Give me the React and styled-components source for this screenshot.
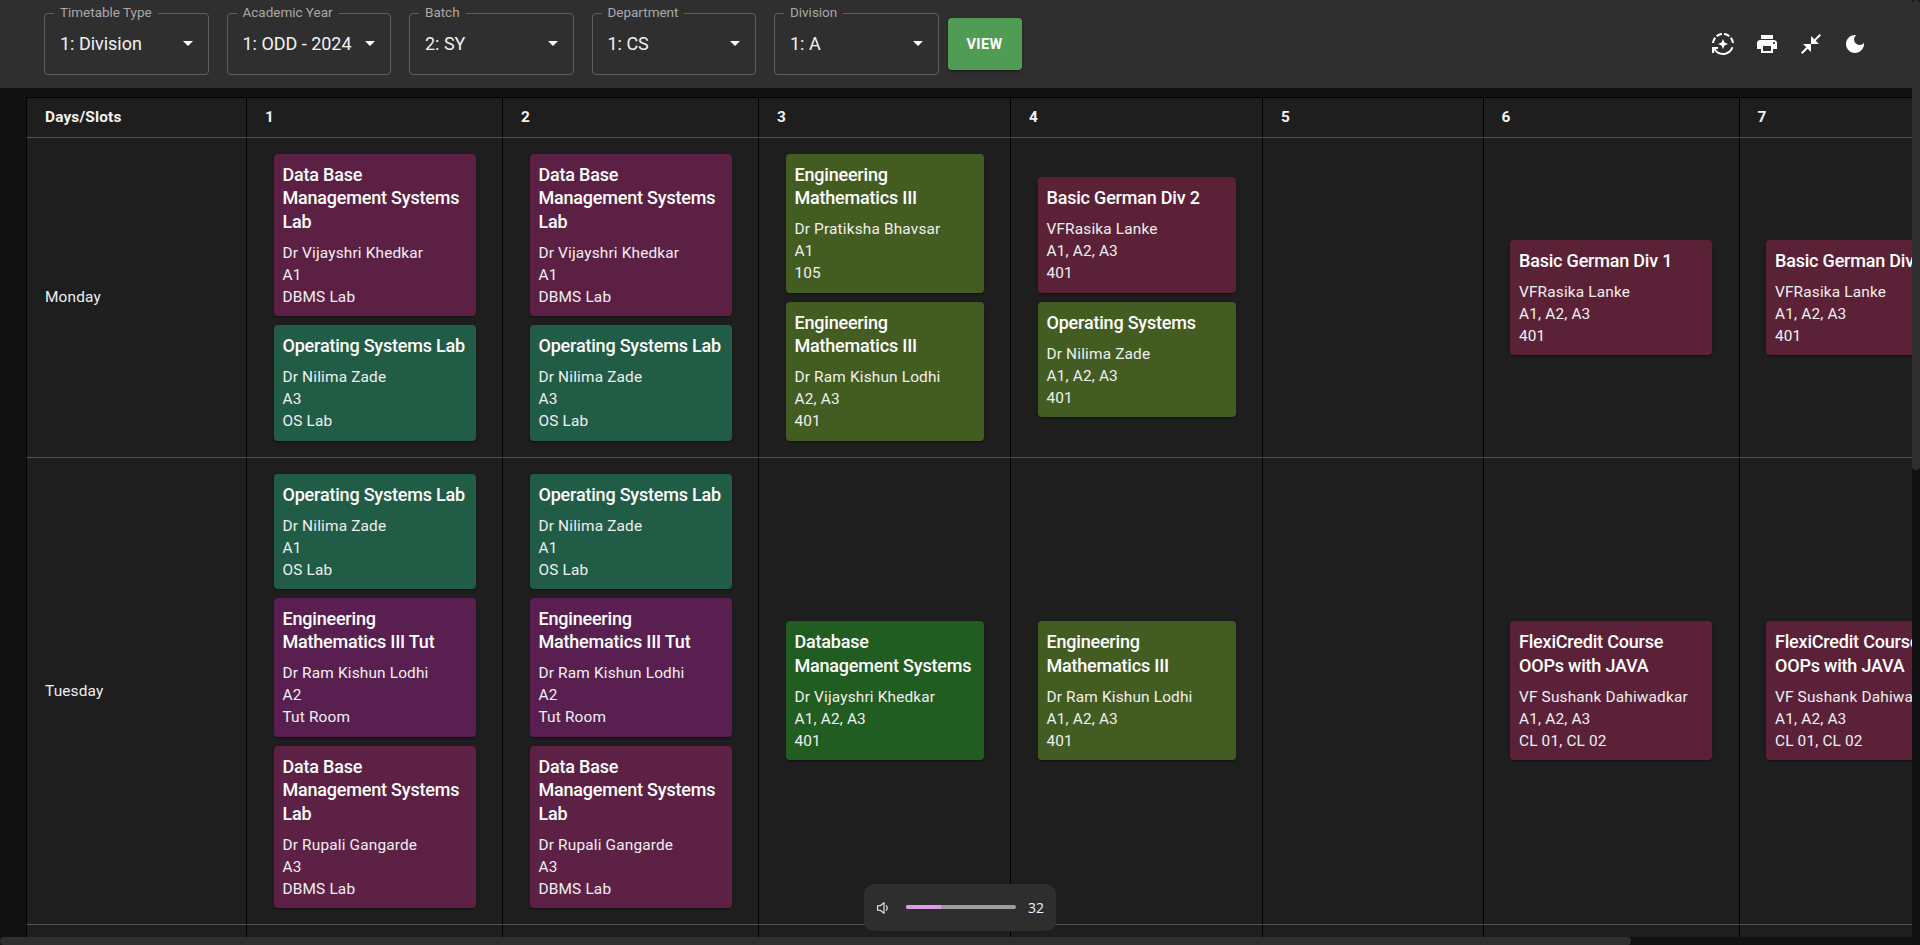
import { Fragment } from 'react'
import styled, { createGlobalStyle } from 'styled-components'

const GlobalStyle = createGlobalStyle`
  html, body {
    margin: 0;
    height: 100%;
    overflow: hidden;
    background: #121212;
    font-family: Roboto, "Liberation Sans", sans-serif;
  }
`

const tones = {
  dbms: '#5c2044',
  dbmsAlt: '#5c2144',
  os: '#215c46',
  maths: '#435c21',
  tut: '#581f50',
  dbs: '#215c21',
  german: '#5b2136',
  flexi: '#5b2139',
}

const columnWidths = [220, 256, 256, 252, 252, 220.5, 256, 256]

const Page = styled.div`
  display: grid;
  grid-template-columns: 1912px 8px;
  grid-template-rows: 937px 8px;
  width: 1920px;
  height: 945px;
`

const Main = styled.main`
  overflow: hidden;
  background: #121212;
`

const Toolbar = styled.header`
  display: flex;
  align-items: center;
  height: 88px;
  padding: 0 35px;
  box-sizing: border-box;
  background: #2f2f2f;
`

const Field = styled.div`
  position: relative;
  display: flex;
  align-items: center;
  justify-content: space-between;
  width: 164.5px;
  height: 61.5px;
  margin: 0 9px;
  padding: 0 15px 1px;
  box-sizing: border-box;
  border: 1px solid #5f5f5f;
  border-radius: 4px;
  color: #f2f2f2;
  font-size: 18px;
  letter-spacing: -0.02px;
`

const FieldLabel = styled.label`
  position: absolute;
  top: -10px;
  left: 9px;
  padding: 0 6px;
  background: #2f2f2f;
  color: #a9a9a9;
  font-size: 13.5px;
  line-height: 16px;
`

const Caret = styled.span`
  width: 0;
  height: 0;
  border-left: 5px solid transparent;
  border-right: 5px solid transparent;
  border-top: 5px solid #fff;
`

const ViewButton = styled.button`
  width: 74px;
  height: 52px;
  padding: 0;
  border: 0;
  border-radius: 4px;
  background: #519c55;
  box-shadow: 0 3px 1px -2px rgba(0, 0, 0, 0.2), 0 2px 2px rgba(0, 0, 0, 0.14), 0 1px 5px rgba(0, 0, 0, 0.12);
  color: #fff;
  font-family: inherit;
  font-size: 14.5px;
  font-weight: 700;
  letter-spacing: 0.4px;
`

const Actions = styled.div`
  display: flex;
  margin-left: auto;
`

const IconButton = styled.span`
  display: flex;
  align-items: center;
  justify-content: center;
  width: 44px;
  height: 44px;
  color: #fff;
`

const TableWrap = styled.div`
  padding: 9px 0 0 26px;
`

const Table = styled.div`
  display: grid;
  grid-template-columns: ${columnWidths.map((w) => `${w}px`).join(' ')};
  width: max-content;
  border-top: 1px solid #000;
  background: #1e1e1e;
`

const Cell = styled.div`
  box-sizing: border-box;
  display: flex;
  flex-direction: column;
  justify-content: center;
  gap: 9px;
  min-height: 40px;
  padding: 16px 26.4px 16px 26.6px;
  border-left: 1px solid #000;
  border-bottom: 1px solid #515151;
`

const HeadCell = styled(Cell)`
  padding: 0 18px 2px;
  color: #f2f2f2;
  font-size: 15.4px;
  font-weight: 700;
  letter-spacing: 0.01071em;
`

const DayCell = styled(Cell)`
  padding: 0 18px;
  color: #f0f0f0;
  font-size: 15.4px;
  letter-spacing: 0.01071em;
`

const EmptyRowCell = styled(Cell)`
  min-height: 320px;
`

const Card = styled.article`
  padding: 9px 8px 8.4px 8.9px;
  border-radius: 4px;
  background: ${({ $tone }) => tones[$tone]};
  box-shadow: 0 2px 1px -1px rgba(0, 0, 0, 0.2), 0 1px 1px rgba(0, 0, 0, 0.14), 0 1px 3px rgba(0, 0, 0, 0.12);
  color: #fff;
`

const CardTitle = styled.h3`
  margin: 0 0 8.6px;
  font-size: 18px;
  font-weight: 500;
  line-height: 23.4px;
  letter-spacing: -0.2px;
`

const CardLine = styled.div`
  color: #f0f0f0;
  font-size: 15.4px;
  letter-spacing: 0.01071em;
  line-height: 22px;
  white-space: nowrap;
`

const VolumePanel = styled.div`
  position: fixed;
  left: 864px;
  top: 884px;
  display: flex;
  align-items: center;
  width: 192px;
  height: 47px;
  padding: 0 10px 0 13px;
  box-sizing: border-box;
  border-radius: 10px;
  background: #2e2e2e;
  color: #f2f2f2;
  font-family: "Open Sans", sans-serif;
  font-size: 14px;
`

const VolumeIcon = styled.svg`
  flex: none;
  width: 12px;
  height: 12px;
`

const VolumeTrack = styled.div`
  flex: none;
  width: 110px;
  height: 4px;
  margin: -2px 12px 0 17px;
  border-radius: 2px;
  background: #9e9e9e;
  overflow: hidden;
`

const VolumeFill = styled.div`
  height: 100%;
  background: #dd9ce6;
`

const RightRail = styled.div`
  grid-column: 2;
  grid-row: 1 / span 2;
  background: #121212;
`

const BottomRail = styled.div`
  grid-column: 1;
  grid-row: 2;
  background: #121212;
`

const VerticalThumb = styled.div`
  height: 470px;
  border-radius: 4px;
  background: #2f2f2f;
`

const HorizontalThumb = styled.div`
  width: 1631px;
  height: 8px;
  border-radius: 4px;
  background: #2f2f2f;
`

const fields = [
  ['Timetable Type', '1: Division'],
  ['Academic Year', '1: ODD - 2024'],
  ['Batch', '2: SY'],
  ['Department', '1: CS'],
  ['Division', '1: A'],
]

const iconPaths = [
  'M19.03 3.56c-1.67-1.39-3.74-2.3-6.03-2.51v2.01c1.73.19 3.31.88 4.61 1.92l1.42-1.42zM11 3.06V1.05c-2.29.2-4.36 1.12-6.03 2.51l1.42 1.42C7.69 3.94 9.27 3.25 11 3.06zM4.98 6.39L3.56 4.97C2.17 6.64 1.26 8.71 1.05 11h2.01c.19-1.73.88-3.31 1.92-4.61zM20.94 11h2.01c-.2-2.29-1.12-4.36-2.51-6.03l-1.42 1.42c1.04 1.3 1.73 2.88 1.92 4.61zM7 12l3.44 1.56L12 17l1.56-3.44L17 12l-3.44-1.56L12 7l-1.56 3.44zM12 21c-3.11 0-5.85-1.59-7.46-4H7v-2H1v6h2v-2.7c1.99 2.84 5.27 4.7 9 4.7 4.87 0 9-3.17 10.44-7.56l-1.96-.45C19.25 18.48 15.92 21 12 21z',
  'M19 8H5c-1.66 0-3 1.34-3 3v6h4v4h12v-4h4v-6c0-1.66-1.34-3-3-3zm-3 11H8v-5h8v5zm3-7c-.55 0-1-.45-1-1s.45-1 1-1 1 .45 1 1-.45 1-1 1zm-1-9H6v4h12V3z',
  'M22 3.41l-5.29 5.29L20 12h-8V4l3.29 3.29L20.59 2 22 3.41zM3.41 22l5.29-5.29L12 20v-8H4l3.29 3.29L2 20.59 3.41 22z',
  'M12 3c-4.97 0-9 4.03-9 9s4.03 9 9 9 9-4.03 9-9c0-.46-.04-.92-.1-1.36-.98 1.37-2.58 2.26-4.4 2.26-2.98 0-5.4-2.42-5.4-5.4 0-1.81.89-3.42 2.26-4.4-.44-.06-.9-.1-1.36-.1z',
]

const dbms = (teacher, batch, tone) => ({ tone, title: 'Data Base Management Systems Lab', lines: [teacher, batch, 'DBMS Lab'] })
const os = (batch) => ({ tone: 'os', title: 'Operating Systems Lab', lines: ['Dr Nilima Zade', batch, 'OS Lab'] })
const maths = (teacher, batch, room) => ({ tone: 'maths', title: 'Engineering Mathematics III', lines: [teacher, batch, room] })
const german = (div) => ({ tone: 'german', title: `Basic German Div ${div}`, lines: ['VFRasika Lanke', 'A1, A2, A3', '401'] })
const flexi = { tone: 'flexi', title: 'FlexiCredit Course OOPs with JAVA', lines: ['VF Sushank Dahiwadkar', 'A1, A2, A3', 'CL 01, CL 02'] }
const tut = { tone: 'tut', title: 'Engineering Mathematics III Tut', lines: ['Dr Ram Kishun Lodhi', 'A2', 'Tut Room'] }

const mondayLab = [dbms('Dr Vijayshri Khedkar', 'A1', 'dbms'), os('A3')]
const tuesdayLab = [os('A1'), tut, dbms('Dr Rupali Gangarde', 'A3', 'dbmsAlt')]

const days = [
  {
    name: 'Monday',
    slots: [
      mondayLab,
      mondayLab,
      [maths('Dr Pratiksha Bhavsar', 'A1', '105'), maths('Dr Ram Kishun Lodhi', 'A2, A3', '401')],
      [german(2), { tone: 'maths', title: 'Operating Systems', lines: ['Dr Nilima Zade', 'A1, A2, A3', '401'] }],
      [],
      [german(1)],
      [german(1)],
    ],
  },
  {
    name: 'Tuesday',
    slots: [
      tuesdayLab,
      tuesdayLab,
      [{ tone: 'dbs', title: 'Database Management Systems', lines: ['Dr Vijayshri Khedkar', 'A1, A2, A3', '401'] }],
      [maths('Dr Ram Kishun Lodhi', 'A1, A2, A3', '401')],
      [],
      [flexi],
      [flexi],
    ],
  },
]

function Lecture({ lecture }) {
  return (
    <Card $tone={lecture.tone}>
      <CardTitle>{lecture.title}</CardTitle>
      {lecture.lines.map((line) => (
        <CardLine key={line}>{line}</CardLine>
      ))}
    </Card>
  )
}

export default function App() {
  const volume = 32

  return (
    <Page>
      <GlobalStyle />
      <Main>
        <Toolbar>
          {fields.map(([label, value]) => (
            <Field key={label}>
              <FieldLabel>{label}</FieldLabel>
              {value}
              <Caret />
            </Field>
          ))}
          <ViewButton>VIEW</ViewButton>
          <Actions>
            {iconPaths.map((d) => (
              <IconButton key={d}>
                <svg width="24" height="24" viewBox="0 0 24 24" fill="currentColor">
                  <path d={d} />
                </svg>
              </IconButton>
            ))}
          </Actions>
        </Toolbar>
        <TableWrap>
          <Table>
            <HeadCell>Days/Slots</HeadCell>
            {[1, 2, 3, 4, 5, 6, 7].map((slot) => (
              <HeadCell key={slot}>{slot}</HeadCell>
            ))}
            {days.map((day) => (
              <Fragment key={day.name}>
                <DayCell>{day.name}</DayCell>
                {day.slots.map((lectures, i) => (
                  <Cell key={i}>
                    {lectures.map((lecture, j) => (
                      <Lecture key={j} lecture={lecture} />
                    ))}
                  </Cell>
                ))}
              </Fragment>
            ))}
            {columnWidths.map((w, i) => (
              <EmptyRowCell key={i} />
            ))}
          </Table>
        </TableWrap>
      </Main>
      <RightRail>
        <VerticalThumb />
      </RightRail>
      <BottomRail>
        <HorizontalThumb />
      </BottomRail>
      <VolumePanel>
        <VolumeIcon viewBox="0 0 12 12" fill="none" stroke="currentColor" strokeWidth="1.1">
          <path d="M.6 3.8h2.6L7 .8v10.4L3.2 8.2H.6z" />
          <path d="M9 3.4a3.4 3.4 0 0 1 0 5.2" />
        </VolumeIcon>
        <VolumeTrack>
          <VolumeFill style={{ width: `${volume}%` }} />
        </VolumeTrack>
        {volume}
      </VolumePanel>
    </Page>
  )
}
